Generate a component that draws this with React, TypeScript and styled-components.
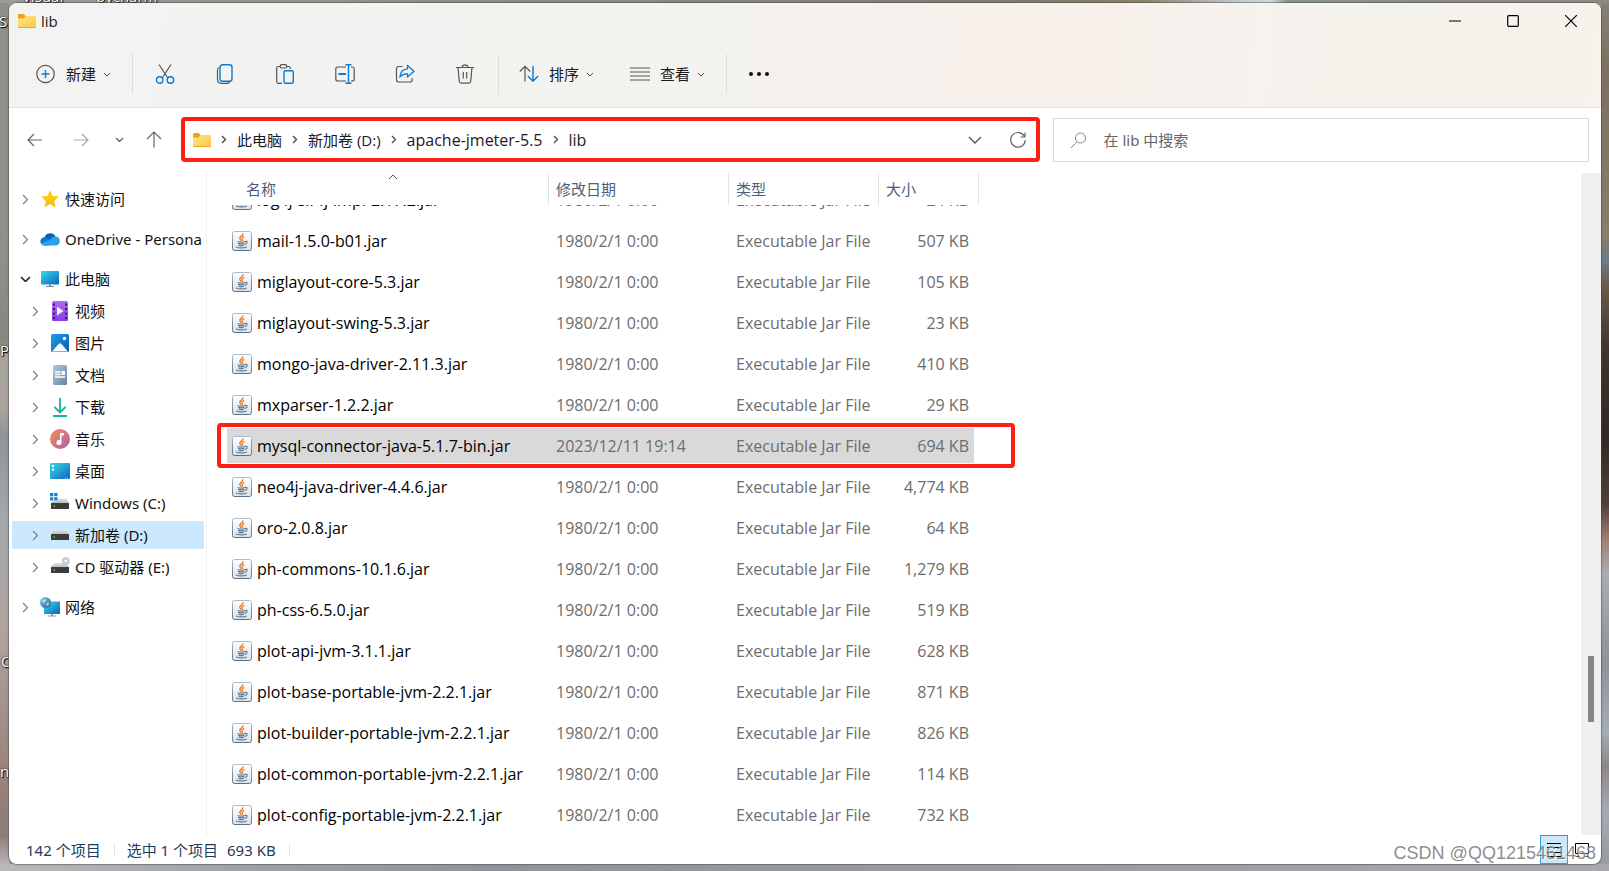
import React, { useLayoutEffect, useRef } from 'react';
import styled, { createGlobalStyle } from 'styled-components';

const GlobalStyle = createGlobalStyle`
  * { box-sizing: border-box; }
  body { margin: 0; }
  body, button, input, table {
    font-family: "Open Sans", "Noto Sans CJK SC", sans-serif;
    font-size: 15px;
    line-height: 20px;
  }
  button { border: 0; padding: 0; background: none; color: inherit; text-align: left; }
  svg { display: block; flex: none; }
`;

/* ---------- desktop ---------- */

const Desktop = styled.div`
  position: relative;
  height: 100vh;
  min-height: 480px;
  overflow: hidden;
  padding: 3px 8px 7px 9px;
  background:
    linear-gradient(90deg, #9b9c95 0%, #8f8f86 30%, #7d7c6c 64%, #8a8268 71%, #c5cdd4 77%, #d5dade 79%, #8b928e 80%, #8b8b84 100%) top / 100% 3px no-repeat,
    linear-gradient(90deg, #b9b9ba 0%, #9fa3a8 15%, #8f959a 30%, #9a9b9e 60%, #a7a9ad 100%) bottom / 100% 7px no-repeat,
    linear-gradient(180deg, #8f9089 0%, #8d9089 30%, #858780 39%, #a6a39f 41%, #a8a29d 47%, #8f9499 50%, #a4a9ac 60%, #b0a39e 72%, #98817a 90%, #8c7d7a 96%, #c3c3c4 100%) left / 9px 100% no-repeat,
    linear-gradient(180deg, #858276 0%, #7d705f 8%, #8c7c68 27%, #6d7b8a 30%, #6c5847 33%, #41342f 40%, #332824 50%, #54403a 58%, #a28175 62%, #a9aeb4 66%, #8d9399 76%, #a5adb4 84%, #8d8787 88%, #a4abb2 93%, #949a9f 100%) right / 8px 100% no-repeat,
    #999;
`;

const DesktopLabel = styled.span<{ $x: number; $y: number }>`
  position: absolute;
  left: ${p => p.$x}px;
  top: ${p => p.$y}px;
  color: #fff;
  text-shadow: 1px 1px 1px #000, 0 0 2px #000;
`;

const Watermark = styled.div`
  position: absolute;
  right: 13px;
  bottom: 8px;
  color: rgba(120, 120, 120, 0.85);
  font-family: "Liberation Sans", Arial, sans-serif;
  font-size: 18px;
  text-shadow: 1px 1px 0 rgba(255, 255, 255, 0.7);
  pointer-events: none;
`;

/* ---------- window frame ---------- */

const Window = styled.main`
  position: relative;
  display: flex;
  flex-direction: column;
  height: 100%;
  overflow: hidden;
  background: #fff;
  border-radius: 8px;
  box-shadow: 0 0 1px 1px rgba(70, 70, 70, 0.5);
`;

const Header = styled.header`
  flex: none;
  border-bottom: 1px solid #e2dfdc;
  background: linear-gradient(97deg, #f3f3f3 0%, #f2f3f0 28%, #f4f2ee 46%, #f8f0eb 64%, #f6f2ed 78%, #f5f3ec 100%);
`;

const TitleBar = styled.div`
  display: flex;
  align-items: center;
  height: 36px;
  padding: 0 1px 0 9px;
`;

const Title = styled.h1`
  flex: 1;
  margin: 0 0 0 5px;
  font-size: 15px;
  font-weight: 400;
  color: #1b1b1b;
`;

const CaptionButton = styled.button`
  display: flex;
  align-items: center;
  justify-content: center;
  width: 58px;
  height: 36px;
`;

const Toolbar = styled.div`
  display: flex;
  align-items: center;
  height: 68px;
  padding: 2px 0 0 9px;
  color: #1b1b1b;
`;

const MenuButton = styled.button`
  display: flex;
  align-items: center;
  height: 40px;
  padding: 0 18px;
`;

const MenuText = styled.span`
  margin: 0 7px 0 10px;
`;

const ToolButton = styled.button`
  display: flex;
  align-items: center;
  justify-content: center;
  width: 60px;
  height: 40px;
`;

const Divider = styled.span`
  width: 1px;
  height: 40px;
  margin: 0 2px 0 3px;
  background: #dedddb;
`;

/* ---------- navigation row ---------- */

const NavRow = styled.nav`
  display: grid;
  grid-template-columns: auto minmax(0, 25fr) minmax(0, 16fr);
  flex: none;
  padding: 9px 12px 11px 3px;
`;

const NavGroup = styled.div`
  display: flex;
  margin-right: 7px;
`;

const NavButton = styled.button<{ $w: number }>`
  display: flex;
  flex: none;
  align-items: center;
  justify-content: center;
  width: ${p => p.$w}px;
  height: 45px;
`;

const AddressBar = styled.div`
  display: flex;
  align-items: center;
  height: 45px;
  padding-left: 8px;
  border: 4px solid #ff1e12;
  border-radius: 4px;
`;

const CrumbArrow = styled.span`
  display: flex;
  justify-content: center;
  width: 26px;
`;

const Crumb = styled.a<{ $latin: boolean }>`
  color: #1b1b1b;
  font-size: ${p => (p.$latin ? 16 : 15)}px;
  text-decoration: none;
  white-space: nowrap;
`;

const Spacer = styled.span`
  flex: 1;
`;

const SearchBox = styled.label`
  display: flex;
  align-items: center;
  height: 44px;
  margin: 1px 0 0 13px;
  padding: 0 16px;
  border: 1px solid #d9d9d9;
`;

const SearchInput = styled.input`
  flex: 1;
  min-width: 0;
  margin-left: 17px;
  padding: 0;
  border: 0;
  outline: 0;
  background: none;
  font-family: "Noto Sans", "Noto Sans CJK SC", sans-serif;
  &::placeholder { color: #666; opacity: 1; }
`;

/* ---------- body ---------- */

const Body = styled.div`
  display: flex;
  flex: 1;
  min-height: 0;
`;

const Sidebar = styled.aside`
  display: flex;
  flex: none;
  flex-direction: column;
  gap: 12px;
  width: 198px;
  padding: 12px 2px 0 3px;
  border-right: 1px solid #f0f0f0;
`;

const TreeGroup = styled.div`
  display: flex;
  flex-direction: column;
  gap: 4px;
`;

const TreeItem = styled.button<{ $nested?: boolean; $selected?: boolean }>`
  display: flex;
  align-items: center;
  width: 100%;
  height: 28px;
  padding-left: ${p => (p.$nested ? 16 : 6)}px;
  overflow: hidden;
  border-radius: 2px;
  white-space: nowrap;
  font-family: "Noto Sans", "Noto Sans CJK SC", sans-serif;
  color: #111;
  background: ${p => (p.$selected ? '#cce8ff' : 'none')};
`;

const TreeArrow = styled.span`
  display: flex;
  flex: none;
  justify-content: center;
  width: 14px;
`;

const TreeIcon = styled.span`
  display: flex;
  flex: none;
  justify-content: center;
  width: 20px;
  margin: 0 5px 0 8px;
`;

const FileTable = styled.table`
  display: flex;
  flex: 1;
  flex-direction: column;
  min-width: 0;
  border-spacing: 0;
`;

const TableHead = styled.thead`
  display: block;
  flex: none;
  padding-left: 20px;
`;

const TableBody = styled.tbody`
  display: block;
  flex: 1;
  min-height: 0;
  overflow: auto;
  padding: 0 0 8px 20px;
  scrollbar-width: none;
`;

const HeadCell = styled.th<{ $indent?: number; $width: number }>`
  position: relative;
  width: ${p => p.$width}px;
  min-width: ${p => p.$width}px;
  height: 32px;
  padding: 0 0 0 ${p => p.$indent ?? 7}px;
  border-right: 1px solid #e2e2e2;
  color: #4c607a;
  font-weight: 400;
  text-align: left;
`;

const SortMark = styled.span`
  position: absolute;
  top: 1px;
  left: 50%;
`;

const Row = styled.tr`
  position: relative;
`;

const Cell = styled.td<{ $width: number; $last?: boolean }>`
  width: ${p => p.$width}px;
  min-width: ${p => p.$width}px;
  height: 41px;
  padding: 3px ${p => (p.$last ? 5 : 0)}px 3px 0;
`;

const CellBox = styled.div<{ $selected?: boolean; $name?: boolean; $right?: boolean }>`
  display: flex;
  align-items: center;
  gap: 5px;
  height: 35px;
  padding: 0 5px 0 ${p => (p.$name ? 5 : 7)}px;
  justify-content: ${p => (p.$right ? 'flex-end' : 'flex-start')};
  white-space: nowrap;
  font-size: 16px;
  color: ${p => (p.$name ? '#000' : '#6d6d6d')};
  background: ${p => (p.$selected ? '#d9d9d9' : 'none')};
`;

const RedFrame = styled.span`
  position: absolute;
  inset: -2px -36px -2px -10px;
  border: 4px solid #ff1e12;
  border-radius: 4px;
  pointer-events: none;
`;

const ScrollTrack = styled.div`
  display: flex;
  flex: none;
  flex-direction: column;
  align-items: center;
  width: 20px;
  background: #f0f0f0;
`;

const ScrollLead = styled.span`
  flex: 483 1 0;
`;

const ScrollThumb = styled.span`
  flex: 66 1 0;
  width: 6px;
  background: #858585;
`;

const ScrollTail = styled.span`
  flex: 113 1 0;
`;

const StatusBar = styled.footer`
  display: flex;
  flex: none;
  align-items: center;
  height: 29px;
  padding: 0 5px 0 17px;
  font-family: "Noto Sans", "Noto Sans CJK SC", sans-serif;
  color: #1e395b;
`;

const StatusText = styled.span`
  margin-right: 9px;
`;

const StatusDivider = styled.span`
  width: 1px;
  height: 13px;
  margin: 0 12px 0 4px;
  background: #e6e6e6;
`;

const ViewButton = styled.button<{ $active?: boolean }>`
  display: flex;
  align-items: center;
  justify-content: center;
  width: 28px;
  height: 29px;
  border: 1px solid ${p => (p.$active ? '#26a0da' : 'transparent')};
  background: ${p => (p.$active ? '#cce8f6' : 'none')};
`;

/* ---------- icons ---------- */

const Gradients = () => (
  <svg width="0" height="0" style={{ position: 'absolute' }} aria-hidden="true">
    <defs>
      <linearGradient id="gFolder" x1="0" y1="0" x2="1" y2="1"><stop offset="0" stopColor="#ffe394" /><stop offset="1" stopColor="#ffc937" /></linearGradient>
      <linearGradient id="gScreen" x1="0" y1="0" x2="1" y2="1"><stop offset="0" stopColor="#37dbe6" /><stop offset="1" stopColor="#0d66bf" /></linearGradient>
      <linearGradient id="gVideo" x1="0" y1="0" x2="0" y2="1"><stop offset="0" stopColor="#b06bf0" /><stop offset="1" stopColor="#8b3fe0" /></linearGradient>
      <linearGradient id="gPicture" x1="0" y1="0" x2="1" y2="1"><stop offset="0" stopColor="#1ba0e8" /><stop offset="1" stopColor="#0a5cb4" /></linearGradient>
      <linearGradient id="gDoc" x1="0" y1="0" x2="1" y2="1"><stop offset="0" stopColor="#b3c6dc" /><stop offset="1" stopColor="#6585a8" /></linearGradient>
      <linearGradient id="gMusic" x1="0" y1="0" x2="1" y2="1"><stop offset="0" stopColor="#f39152" /><stop offset="1" stopColor="#b05bb0" /></linearGradient>
      <linearGradient id="gDisk" x1="0" y1="0" x2="0" y2="1"><stop offset="0" stopColor="#e3e3e3" /><stop offset="1" stopColor="#bdbdbd" /></linearGradient>
      <linearGradient id="gStar" x1="0" y1="0" x2="0" y2="1"><stop offset="0" stopColor="#ffd814" /><stop offset="1" stopColor="#fbb40c" /></linearGradient>
      <linearGradient id="gJar" x1="0" y1="0" x2="0" y2="1"><stop offset="0" stopColor="#ffffff" /><stop offset="1" stopColor="#dde1e6" /></linearGradient>
      <linearGradient id="gJarEdge" x1="0" y1="0" x2="0" y2="1"><stop offset="0" stopColor="#a9bccb" /><stop offset="1" stopColor="#57708a" /></linearGradient>
      <linearGradient id="gGlobe" x1="0" y1="0" x2="1" y2="1"><stop offset="0" stopColor="#8fd0ea" /><stop offset="1" stopColor="#1e5f96" /></linearGradient>
    </defs>
  </svg>
);

const Folder = () => (
  <svg width="18" height="14" viewBox="0 0 18 14">
    <path d="M0 1.2Q0 0 1.2 0H5.6L7.6 2H9V5H0Z" fill="#eda50e" />
    <path d="M0 4.6H5.4L8 2H17Q18 2 18 3V13Q18 14 17 14H1Q0 14 0 13Z" fill="url(#gFolder)" />
    <path d="M0 13H18Q18 14 17 14H1Q0 14 0 13Z" fill="#e9a82a" />
  </svg>
);

type Dir = 'right' | 'down' | 'up';
const Chevron = ({ dir = 'right', size = 8, color = '#555', width = 1.2 }: { dir?: Dir; size?: number; color?: string; width?: number }) => {
  const half = size / 2;
  const d = dir === 'right' ? `M1 1L${half + 1} ${half + 1}L1 ${size + 1}` : dir === 'down' ? `M1 1L${half + 1} ${half + 1}L${size + 1} 1` : `M1 ${half + 1}L${half + 1} 1L${size + 1} ${half + 1}`;
  const w = dir === 'right' ? half + 2 : size + 2;
  const h = dir === 'right' ? size + 2 : half + 2;
  return <svg width={w} height={h} viewBox={`0 0 ${w} ${h}`} fill="none" stroke={color} strokeWidth={width}><path d={d} /></svg>;
};

const Line = ({ w = 20, h = 20, color = '#555', sw = 1.2, children }: { w?: number; h?: number; color?: string; sw?: number; children: React.ReactNode }) => (
  <svg width={w} height={h} viewBox={`0 0 ${w} ${h}`} fill="none" stroke={color} strokeWidth={sw}>{children}</svg>
);

const BLUE = '#0a7ad6';

const IconNew = () => <Line><circle cx="9.500" cy="10" r="8.700" /><path d="M9.500 6V14M5.500 10H13.500" stroke={BLUE} strokeWidth="1.400" /></Line>;
const IconCut = () => (
  <Line><path d="M4 0.500L12.800 14M16 0.500L7.200 14" /><g stroke={BLUE} strokeWidth="1.400"><circle cx="4.600" cy="16" r="3.200" /><circle cx="15.400" cy="16" r="3.200" /></g></Line>
);
const IconCopy = () => (
  <Line><path d="M4 3.500C2.700 4 2.500 5 2.500 6V15.500Q2.500 19.300 6.300 19.300H12Q14 19.300 14.600 17.800" /><rect x="5" y="0.800" width="12" height="16.500" rx="2.500" stroke={BLUE} strokeWidth="1.400" /></Line>
);
const IconPaste = () => (
  <Line><path d="M5 2.500H3.500Q1.700 2.500 1.700 4.300V17.500Q1.700 19.300 3.500 19.300H7M12 2.500H13.500Q15.300 2.500 15.300 4.300V5" /><rect x="5.200" y="0.700" width="6.600" height="3.300" rx="1.500" /><rect x="9" y="6.800" width="9.300" height="12.500" rx="1.500" stroke={BLUE} strokeWidth="1.400" /></Line>
);
const IconRename = () => (
  <Line><path d="M11 3H3Q0.800 3 0.800 5V15Q0.800 17 3 17H11M16 3H17Q19.200 3 19.200 5V15Q19.200 17 17 17H16" /><path d="M13.500 1V19M10.500 0.800H16.500M10.500 19.200H16.500" stroke={BLUE} strokeWidth="1.400" /><path d="M3.500 10H11" stroke={BLUE} strokeWidth="2" /></Line>
);
const IconShare = () => (
  <Line><path d="M7.500 2.500H3.700Q1.500 2.500 1.500 4.700V15.800Q1.500 18 3.700 18H15Q17.200 18 17.200 15.800V14" /><path d="M12.500 1.500L19 7.300L12.500 13V9.800C9 9.600 7 10.500 4.800 13C5.400 8.500 8 5 12.500 4.800Z" stroke={BLUE} strokeWidth="1.300" strokeLinejoin="round" /></Line>
);
const IconDelete = () => (
  <Line><path d="M1 3.500H19M7 3.200Q7.500 0.800 10 0.800T13 3.200M3 3.500L4.300 17.300Q4.500 19.200 6.300 19.200H13.700Q15.500 19.200 15.700 17.300L17 3.500M8.300 8V14.500M11.700 8V14.500" /></Line>
);
const IconSort = () => (
  <Line><path d="M6 17.500V2.500M0.800 7.500L6 2.300L11.200 7.500" /><path d="M14 2V17M8.800 12L14 17.200L19.200 12" stroke={BLUE} strokeWidth="1.400" /></Line>
);
const IconView = () => <Line><path d="M0 4H20M0 8H20M0 12H20M0 16H20" /></Line>;
const IconMore = () => <svg width="20" height="20" viewBox="0 0 20 20" fill="#111"><circle cx="2" cy="10" r="2" /><circle cx="10" cy="10" r="2" /><circle cx="18" cy="10" r="2" /></svg>;

const IconBack = ({ color = '#666', flip = false }: { color?: string; flip?: boolean }) => (
  <Line w={16} h={14} color={color}><path d={flip ? 'M1 7H15M9 1L15 7L9 13' : 'M15 7H1M7 1L1 7L7 13'} /></Line>
);
const IconUp = () => <Line w={16} h={17} color="#666"><path d="M8 16.500V1M1 8L8 1L15 8" /></Line>;
const IconRefresh = () => <Line w={18} h={18} color="#666"><path d="M15.500 5.500A7.300 7.300 0 1 0 16.300 9M16 1.500V6H11.500" /></Line>;
const IconSearch = () => <Line w={17} h={17} color="#888" sw={1}><circle cx="10.500" cy="6" r="5" /><path d="M7 10L1 16" /></Line>;

const JarIcon = () => (
  <svg width="20" height="20" viewBox="0 0 20 20" fill="none">
    <rect x="0.500" y="0.500" width="19" height="19" rx="2" fill="url(#gJar)" stroke="url(#gJarEdge)" />
    <path d="M10.800 2.300C12 4.500 7.800 5.300 7.800 7.200C7.800 8.300 8.700 8.800 9.300 9.800M12.300 5.300C10.800 6 9.800 6.600 10 7.600C10.100 8.300 11 8.700 10.400 9.800" stroke="#e8792a" strokeWidth="1.300" />
    <path d="M5.500 10.500Q9 11.700 13 10.500M6 12.400Q9 13.400 12.300 12.400M6.600 14.300Q9 15 11.800 14.300M13 10.600Q15.600 10 15 11.800Q14.300 13.300 12.600 13.500M4 16Q9.500 17.800 14.800 16" stroke="#5d7d99" strokeWidth="1.200" />
  </svg>
);

const StarIcon = () => <svg width="18" height="18" viewBox="0 0 18 18"><path d="M9 0L11.600 5.900L18 6.600L13.200 10.900L14.600 17.400L9 14.100L3.400 17.400L4.800 10.900L0 6.600L6.400 5.900Z" fill="url(#gStar)" /></svg>;
const CloudIcon = () => (
  <svg width="20" height="14" viewBox="0 0 20 14">
    <path d="M4.500 5.500A6 6 0 0 1 15.500 4.200L12 9L4 8Z" fill="#0a5fb8" />
    <path d="M4.200 13.500A4.200 4.200 0 1 1 6.500 5.600L14 10L9 13.500Z" fill="#1177d2" />
    <path d="M15.800 4.600A4.500 4.500 0 0 1 16 13.500H4.500Q2 13.500 1.200 11.700L10 7.500Q12.500 4.400 15.800 4.600Z" fill="#28a0ea" />
  </svg>
);
const PcIcon = () => (
  <svg width="18" height="16" viewBox="0 0 18 16"><rect width="18" height="13.500" rx="0.500" fill="url(#gScreen)" /><path d="M8 13.500H10V15H8ZM5 15H13V16H5Z" fill="#7b8791" /></svg>
);
const VideoIcon = () => (
  <svg width="16" height="20" viewBox="0 0 16 20"><rect width="16" height="20" rx="1.500" fill="url(#gVideo)" /><path d="M5 5.500L11.500 10L5 14.500Z" fill="#f5ecff" /><path d="M1 3.500H3M1 8H3M1 12.500H3M1 17H3M13 3.500H15M13 8H15M13 12.500H15M13 17H15" stroke="#3f1580" strokeWidth="2" /></svg>
);
const PictureIcon = () => (
  <svg width="18" height="18" viewBox="0 0 18 18"><rect width="18" height="18" rx="1.500" fill="url(#gPicture)" /><path d="M1 17.500L7.800 9.800Q9 8.500 10.200 9.800L17 17.500Z" fill="#f4f9ff" /><circle cx="13.500" cy="4.500" r="1.700" fill="#fff" /></svg>
);
const DocIcon = () => (
  <svg width="14" height="20" viewBox="0 0 14 20"><rect width="14" height="20" rx="1.500" fill="url(#gDoc)" /><path d="M2 7H7.500M2 9.500H7.500M2 12H12" stroke="#fff" strokeWidth="1.300" /><rect x="8.500" y="6" width="3.500" height="4" fill="#fff" /></svg>
);
const DownloadIcon = () => (
  <svg width="14" height="19" viewBox="0 0 14 19" fill="none" stroke="#18b294" strokeWidth="1.800"><path d="M7 0V14M1.500 9L7 14.500L12.500 9M0 18H14" /></svg>
);
const MusicIcon = () => (
  <svg width="20" height="20" viewBox="0 0 20 20"><circle cx="10" cy="10" r="10" fill="url(#gMusic)" /><path d="M10 4H14V6.500H11.500V13.300A2.500 2.500 0 1 1 10 11.200Z" fill="#fff" /></svg>
);
const DesktopIcon = () => (
  <svg width="20" height="16" viewBox="0 0 20 16"><rect width="20" height="16" rx="1" fill="url(#gScreen)" /><path d="M2 2H4V4H2ZM2 5.500H4V7.500H2Z" fill="#fff" /><path d="M15 15H16M17 15H18" stroke="#d9efff" /></svg>
);
const DriveIcon = ({ kind }: { kind?: 'windows' | 'cd' }) => {
  const tall = Boolean(kind);
  return (
    <svg width="20" height={tall ? 20 : 10} viewBox={tall ? '0 0 20 20' : '0 6 20 10'}>
      {kind === 'windows' && <path d="M0 0H3.300V3.300H0ZM4.200 0H7.500V3.300H4.200ZM0 4.200H3.300V7.500H0ZM4.200 4.200H7.500V7.500H4.200Z" fill="#1284d8" />}
      <path d={kind === 'windows' ? 'M8 5.500H16L19 10H1L3 8H8Z' : 'M4 6H16L19 10H1Z'} fill="url(#gDisk)" />
      <rect x="1" y="10" width="18" height="6" rx="0.500" fill="#3c3c3c" />
      <rect x="3.500" y="12.300" width="1.500" height="1.500" fill="#35e02c" />
      {kind === 'cd' && <g><circle cx="15.800" cy="4" r="4" fill="#c9cdd1" /><circle cx="15.800" cy="4" r="1.300" fill="#fff" /></g>}
    </svg>
  );
};
const NetworkIcon = () => (
  <svg width="20" height="20" viewBox="0 0 20 20"><rect x="4" y="4.500" width="16" height="12.500" rx="0.500" fill="url(#gScreen)" /><path d="M11 17H13V18.500H16V19.500H8V18.500H11Z" fill="#8d989f" /><circle cx="5.500" cy="5.500" r="5.500" fill="url(#gGlobe)" /><path d="M2 4Q4 1.500 6.500 2.500Q6 5 3.500 6ZM6 6.500L9 5.500Q9.500 8 7 9Z" fill="#d6f0f2" opacity="0.700" /></svg>
);

/* ---------- data ---------- */

type Node = { label: string; icon: React.ReactNode; nested?: boolean; open?: boolean; selected?: boolean };

const tree: Node[][] = [
  [{ label: '快速访问', icon: <StarIcon /> }],
  [{ label: 'OneDrive - Persona', icon: <CloudIcon /> }],
  [
    { label: '此电脑', icon: <PcIcon />, open: true },
    { label: '视频', icon: <VideoIcon />, nested: true },
    { label: '图片', icon: <PictureIcon />, nested: true },
    { label: '文档', icon: <DocIcon />, nested: true },
    { label: '下载', icon: <DownloadIcon />, nested: true },
    { label: '音乐', icon: <MusicIcon />, nested: true },
    { label: '桌面', icon: <DesktopIcon />, nested: true },
    { label: 'Windows (C:)', icon: <DriveIcon kind="windows" />, nested: true },
    { label: '新加卷 (D:)', icon: <DriveIcon />, nested: true, selected: true },
    { label: 'CD 驱动器 (E:)', icon: <DriveIcon kind="cd" />, nested: true },
  ],
  [{ label: '网络', icon: <NetworkIcon /> }],
];

const columns = { name: 322, date: 180, type: 150, size: 100 };

const OLD = '1980/2/1 0:00';
const files: [name: string, date: string, size: string][] = [
  ['log4j-slf4j-impl-2.17.2.jar', OLD, '24 KB'],
  ['mail-1.5.0-b01.jar', OLD, '507 KB'],
  ['miglayout-core-5.3.jar', OLD, '105 KB'],
  ['miglayout-swing-5.3.jar', OLD, '23 KB'],
  ['mongo-java-driver-2.11.3.jar', OLD, '410 KB'],
  ['mxparser-1.2.2.jar', OLD, '29 KB'],
  ['mysql-connector-java-5.1.7-bin.jar', '2023/12/11 19:14', '694 KB'],
  ['neo4j-java-driver-4.4.6.jar', OLD, '4,774 KB'],
  ['oro-2.0.8.jar', OLD, '64 KB'],
  ['ph-commons-10.1.6.jar', OLD, '1,279 KB'],
  ['ph-css-6.5.0.jar', OLD, '519 KB'],
  ['plot-api-jvm-3.1.1.jar', OLD, '628 KB'],
  ['plot-base-portable-jvm-2.2.1.jar', OLD, '871 KB'],
  ['plot-builder-portable-jvm-2.2.1.jar', OLD, '826 KB'],
  ['plot-common-portable-jvm-2.2.1.jar', OLD, '114 KB'],
  ['plot-config-portable-jvm-2.2.1.jar', OLD, '732 KB'],
];
const SELECTED = 'mysql-connector-java-5.1.7-bin.jar';

const crumbs = ['此电脑', '新加卷 (D:)', 'apache-jmeter-5.5', 'lib'];

const tools: [string, React.ReactNode][] = [
  ['剪切', <IconCut />],
  ['复制', <IconCopy />],
  ['粘贴', <IconPaste />],
  ['重命名', <IconRename />],
  ['共享', <IconShare />],
  ['删除', <IconDelete />],
];

/* ---------- parts ---------- */

const FileList = () => {
  const body = useRef<HTMLTableSectionElement>(null);
  useLayoutEffect(() => {
    if (body.current) body.current.scrollTop = 26;
  }, []);
  return (
    <FileTable>
      <TableHead>
        <tr>
          <HeadCell $width={columns.name} $indent={19}>名称<SortMark><Chevron dir="up" size={8} width={1} /></SortMark></HeadCell>
          <HeadCell $width={columns.date}>修改日期</HeadCell>
          <HeadCell $width={columns.type}>类型</HeadCell>
          <HeadCell $width={columns.size}>大小</HeadCell>
        </tr>
      </TableHead>
      <TableBody ref={body}>
        {files.map(([name, date, size]) => {
          const on = name === SELECTED;
          return (
            <Row key={name}>
              <Cell $width={columns.name}><CellBox $name $selected={on}><JarIcon />{name}</CellBox></Cell>
              <Cell $width={columns.date}><CellBox $selected={on}>{date}</CellBox></Cell>
              <Cell $width={columns.type}><CellBox $selected={on}>Executable Jar File</CellBox></Cell>
              <Cell $width={columns.size} $last><CellBox $right $selected={on}>{size}</CellBox>{on && <RedFrame />}</Cell>
            </Row>
          );
        })}
      </TableBody>
    </FileTable>
  );
};

export default function App() {
  return (
    <Desktop>
      <GlobalStyle />
      <Gradients />
      <DesktopLabel $x={22} $y={-14}>Visual</DesktopLabel>
      <DesktopLabel $x={96} $y={-14}>pycharm</DesktopLabel>
      <DesktopLabel $x={-1} $y={11}>S</DesktopLabel>
      <DesktopLabel $x={0} $y={340}>P</DesktopLabel>
      <DesktopLabel $x={1} $y={651}>C</DesktopLabel>
      <DesktopLabel $x={0} $y={761}>n</DesktopLabel>
      <Window>
        <Header>
          <TitleBar>
            <Folder />
            <Title>lib</Title>
            <CaptionButton aria-label="最小化"><Line w={12} h={12} color="#000"><path d="M0 6H12" /></Line></CaptionButton>
            <CaptionButton aria-label="最大化"><Line w={12} h={12} color="#000"><rect x="0.700" y="0.700" width="10.600" height="10.600" rx="1" /></Line></CaptionButton>
            <CaptionButton aria-label="关闭"><Line w={12} h={12} color="#000"><path d="M0 0L12 12M12 0L0 12" /></Line></CaptionButton>
          </TitleBar>
          <Toolbar>
            <MenuButton><IconNew /><MenuText>新建</MenuText><Chevron dir="down" size={6} width={1} /></MenuButton>
            <Divider />
            {tools.map(([label, icon]) => <ToolButton key={label} aria-label={label}>{icon}</ToolButton>)}
            <Divider />
            <MenuButton><IconSort /><MenuText>排序</MenuText><Chevron dir="down" size={6} width={1} /></MenuButton>
            <MenuButton><IconView /><MenuText>查看</MenuText><Chevron dir="down" size={6} width={1} /></MenuButton>
            <Divider />
            <ToolButton aria-label="更多"><IconMore /></ToolButton>
          </Toolbar>
        </Header>
        <NavRow>
          <NavGroup>
            <NavButton $w={46} aria-label="后退"><IconBack /></NavButton>
            <NavButton $w={46} aria-label="前进"><IconBack color="#a8a8a8" flip /></NavButton>
            <NavButton $w={30} aria-label="最近的位置"><Chevron dir="down" size={7} /></NavButton>
            <NavButton $w={40} aria-label="上移"><IconUp /></NavButton>
          </NavGroup>
          <AddressBar>
            <Folder />
            {crumbs.map(c => (
              <React.Fragment key={c}>
                <CrumbArrow><Chevron size={7} width={1.5} /></CrumbArrow>
                <Crumb href="#" $latin={/^[a-z]/.test(c)}>{c}</Crumb>
              </React.Fragment>
            ))}
            <Spacer />
            <NavButton $w={50} aria-label="展开"><Chevron dir="down" size={12} width={1.4} /></NavButton>
            <NavButton $w={36} aria-label="刷新"><IconRefresh /></NavButton>
          </AddressBar>
          <SearchBox>
            <IconSearch />
            <SearchInput type="text" placeholder="在 lib 中搜索" aria-label="搜索" />
          </SearchBox>
        </NavRow>
        <Body>
          <Sidebar>
            {tree.map((group, i) => (
              <TreeGroup key={i}>
                {group.map(n => (
                  <TreeItem key={n.label} $nested={n.nested} $selected={n.selected}>
                    <TreeArrow>{n.open ? <Chevron dir="down" size={9} color="#222" width={1.6} /> : <Chevron size={9} color="#858585" width={1.4} />}</TreeArrow>
                    <TreeIcon>{n.icon}</TreeIcon>
                    {n.label}
                  </TreeItem>
                ))}
              </TreeGroup>
            ))}
          </Sidebar>
          <FileList />
          <ScrollTrack><ScrollLead /><ScrollThumb /><ScrollTail /></ScrollTrack>
        </Body>
        <StatusBar>
          <StatusText>142 个项目</StatusText>
          <StatusDivider />
          <StatusText>选中 1 个项目</StatusText>
          <StatusText>693 KB</StatusText>
          <StatusDivider />
          <Spacer />
          <ViewButton $active aria-label="详细信息"><Line w={14} h={14} color="#000" sw={1}><path d="M0 0.500H14M0 4.500H14M0 9.500H14M0 13.500H14" /></Line></ViewButton>
          <ViewButton aria-label="大图标"><Line w={14} h={14} color="#000" sw={1}><path d="M0.500 0.500H13.500V10.500H0.500ZM0 13.500H5M9 13.500H14" /></Line></ViewButton>
        </StatusBar>
      </Window>
      <Watermark>CSDN @QQ1215461468</Watermark>
    </Desktop>
  );
}
